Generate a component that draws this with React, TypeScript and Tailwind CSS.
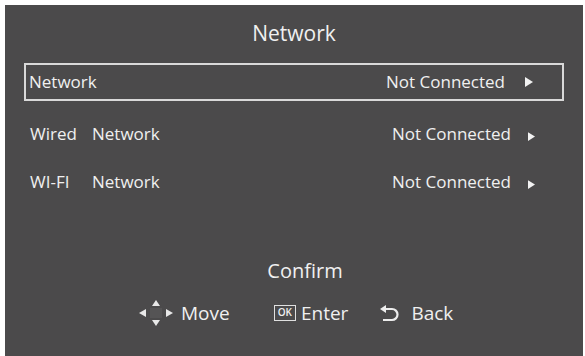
import React from 'react';

const font = { fontFamily: '"Open Sans", "Noto Sans", sans-serif' };

const Arrow = ({ big }: { big?: boolean }) => (
  <svg width={big ? 8 : 7} height={big ? 10 : 9} viewBox="0 0 8 10" className={big ? '' : 'mt-[4px]'}>
    <polygon points="0,0 8,5 0,10" fill="#f2f2f2" />
  </svg>
);

const MoveIcon = () => (
  <svg width="34" height="26" viewBox="0 0 34 26">
    <rect x="11" y="8" width="12" height="10" fill="#555455" />
    <polygon points="0,13 7,9 7,17" fill="#e8e8e8" />
    <polygon points="34,13 27,9 27,17" fill="#e8e8e8" />
    <polygon points="17,0 13,6 21,6" fill="#e8e8e8" />
    <polygon points="17,26 13,20 21,20" fill="#e8e8e8" />
  </svg>
);

const BackIcon = () => (
  <svg width="20" height="17" viewBox="0 0 20 17">
    <polygon points="0,4 6,0 6,8" fill="#ededed" />
    <path d="M6 4 H12 A5.5 5.5 0 0 1 12 15 H3" fill="none" stroke="#ededed" strokeWidth="2.2" />
  </svg>
);

export default function App() {
  return (
    <div className="w-[585px] h-[356px] bg-white pt-[5px] pl-[5px] pr-[2px] overflow-hidden" style={font}>
      <div className="w-[578px] h-[351px] bg-[#4b4a4b] text-[#f0f0f0] flex flex-col">
        {/* Titulo */}
        <div className="mt-[14px] h-[28px] leading-[28px] text-[21px] text-center">Network</div>

        {/* Fila seleccionada */}
        <div className="mt-[16px] mx-[19px] h-[38px] border-2 border-[#d9d9d9] flex items-center pl-[3px] pr-[29px] text-[17px]">
          <span className="flex-1">Network</span>
          <span>Not Connected</span>
          <span className="ml-[20px] flex"><Arrow big /></span>
        </div>

        {/* Filas */}
        <div className="mt-[19px] h-[28px] flex items-center pl-[25px] pr-[48px] text-[17px]">
          <span className="w-[62px]">Wired</span>
          <span className="flex-1">Network</span>
          <span>Not Connected</span>
          <span className="ml-[17px] flex"><Arrow /></span>
        </div>
        <div className="mt-[20px] h-[28px] flex items-center pl-[25px] pr-[48px] text-[17px]">
          <span className="w-[62px]">WI-FI</span>
          <span className="flex-1">Network</span>
          <span>Not Connected</span>
          <span className="ml-[17px] flex"><Arrow /></span>
        </div>

        <div className="mt-[61px] h-[28px] leading-[28px] text-[20px] text-center pl-[22px]">Confirm</div>

        {/* Ayuda */}
        <div className="mt-[14px] h-[28px] flex items-center pl-[134px] text-[19px]">
          <MoveIcon />
          <span className="ml-[8px]">Move</span>
          <span className="ml-[44px] h-[16px] px-[3px] border-[1.5px] border-[#e0e0e0] text-[10px] leading-[13px] font-semibold">OK</span>
          <span className="ml-[5px]">Enter</span>
          <span className="ml-[32px] flex"><BackIcon /></span>
          <span className="ml-[11px]">Back</span>
        </div>
      </div>
    </div>
  );
}
